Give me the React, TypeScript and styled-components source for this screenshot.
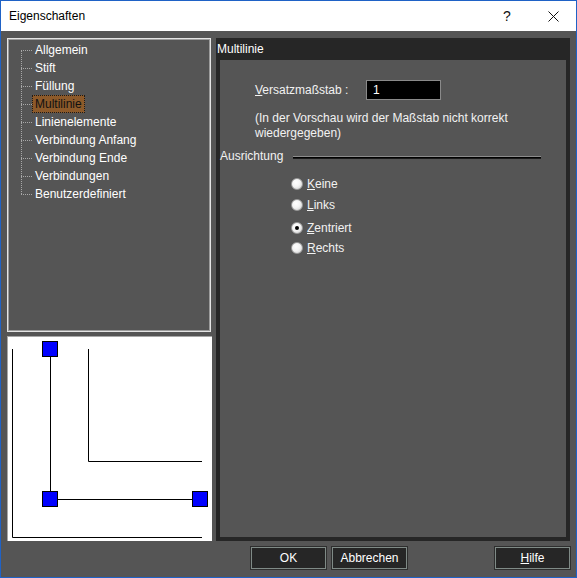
import styled, { createGlobalStyle } from "styled-components";

const GlobalStyle = createGlobalStyle`
  html, body {
    margin: 0;
    padding: 0;
    background: #ffffff;
  }
  body {
    font-family: "Liberation Sans", Arial, sans-serif;
    font-size: 12px;
  }
`;

const Window = styled.div`
  width: 577px;
  height: 578px;
  box-sizing: border-box;
  border: 1px solid #1f62c6;
  display: flex;
  flex-direction: column;
  background: #555555;
`;

const TitleBar = styled.div`
  height: 30px;
  background: #ffffff;
  display: flex;
  align-items: center;
  padding-left: 8px;
  color: #000;
  font-size: 12px;
`;

const TitleText = styled.span`
  flex-grow: 1;
`;

const TitleButton = styled.span`
  width: 46px;
  display: flex;
  justify-content: center;
  align-items: center;
  font-size: 14px;
  color: #111;
`;

const Body = styled.div`
  flex-grow: 1;
  display: flex;
  flex-direction: column;
  padding: 7px 6px 7px 6px;
  gap: 6px;
`;

const Main = styled.div`
  height: 503px;
  display: flex;
  gap: 4px;
`;

const LeftColumn = styled.div`
  width: 205px;
  display: flex;
  flex-direction: column;
  gap: 4px;
`;

const TreePanel = styled.div`
  height: 294px;
  box-sizing: border-box;
  border: 1px solid #e4e4e4;
  box-shadow: inset 0 0 0 1px #9c9c9c;
  width: 204px;
  padding: 2px 0 0 1px;
`;

const TreeList = styled.ul`
  list-style: none;
  margin: 0;
  padding: 0;
  position: relative;
  &::before {
    content: "";
    position: absolute;
    left: 12px;
    top: 9px;
    height: 144px;
    border-left: 1px dotted #a8a8a8;
  }
`;

const TreeItem = styled.li`
  height: 18px;
  display: flex;
  align-items: center;
  padding-left: 12px;
  &::before {
    content: "";
    width: 11px;
    border-top: 1px dotted #a8a8a8;
  }
`;

const TreeLabel = styled.span<{ $selected?: boolean }>`
  padding: 1px 2px;
  line-height: 14px;
  border: 1px dotted ${(p) => (p.$selected ? "#1a1a1a" : "transparent")};
  background: ${(p) => (p.$selected ? "#8d5a2a" : "transparent")};
  color: ${(p) => (p.$selected ? "#111" : "#ffffff")};
`;

const Preview = styled.div`
  height: 205px;
  background: #ffffff;
  border-top: 1px solid #a8a8a8;
  border-left: 1px solid #a8a8a8;
  box-sizing: border-box;
`;

const RightPanel = styled.div`
  flex-grow: 1;
  background: #262626;
  display: flex;
  flex-direction: column;
  padding: 0 4px 4px 4px;
`;

const PanelHeader = styled.div`
  height: 22px;
  display: flex;
  align-items: center;
  margin-left: -3px;
  color: #ffffff;
`;

const PageArea = styled.div`
  flex-grow: 1;
  background: #555555;
  color: #f2f2f2;
  display: flex;
  flex-direction: column;
`;

const FieldRow = styled.div`
  display: flex;
  align-items: center;
  margin: 20px 0 0 35px;
`;

const FieldLabel = styled.label`
  width: 111px;
  white-space: nowrap;
`;

const TextInput = styled.div`
  width: 75px;
  height: 20px;
  box-sizing: border-box;
  background: #000000;
  border: 1px solid #8a8a8a;
  color: #ffffff;
  padding-left: 6px;
  line-height: 18px;
`;

const Note = styled.p`
  margin: 11px 0 0 35px;
  line-height: 15px;
  width: 280px;
`;

const GroupHeader = styled.div`
  display: flex;
  align-items: center;
  margin-top: 8px;
  gap: 10px;
`;

const GroupLine = styled.div`
  width: 248px;
  height: 1px;
  background: #000000;
  border-top: 1px solid #8c8c8c;
  border-bottom: 1px solid #1a1a1a;
  margin-top: 3px;
`;

const RadioList = styled.div`
  display: flex;
  flex-direction: column;
  margin: 13px 0 0 71px;
`;

const RadioRow = styled.div<{ $gap: number }>`
  display: flex;
  align-items: center;
  height: 16px;
  margin-top: ${(p) => p.$gap}px;
  gap: 4px;
`;

const RadioDot = styled.span<{ $checked?: boolean }>`
  width: 12px;
  height: 12px;
  box-sizing: border-box;
  border-radius: 50%;
  border: 1px solid #9a9a9a;
  background: radial-gradient(circle at 40% 35%, #ffffff 0%, #f4f4f4 45%, #c8c8c8 100%);
  display: flex;
  align-items: center;
  justify-content: center;
  &::after {
    content: "";
    width: 4px;
    height: 4px;
    border-radius: 50%;
    background: ${(p) => (p.$checked ? "#000" : "transparent")};
  }
`;

const ButtonRow = styled.div`
  height: 22px;
  display: flex;
  justify-content: flex-end;
  gap: 6px;
`;

const Button = styled.button<{ $push?: number }>`
  width: 75px;
  height: 22px;
  background: #262626;
  border: 1px solid #7f8a86;
  box-shadow: 0 0 0 1px #2e2e2e;
  color: #ffffff;
  font-family: "Liberation Sans", Arial, sans-serif;
  font-size: 12px;
  padding: 0;
  margin-left: ${(p) => p.$push ?? 0}px;
`;

const treeItems = [
  "Allgemein",
  "Stift",
  "Füllung",
  "Multilinie",
  "Linienelemente",
  "Verbindung Anfang",
  "Verbindung Ende",
  "Verbindungen",
  "Benutzerdefiniert",
];

const radios = [
  { key: "K", rest: "eine", gap: 0 },
  { key: "L", rest: "inks", gap: 5 },
  { key: "Z", rest: "entriert", gap: 7 },
  { key: "R", rest: "echts", gap: 4 },
];

const PreviewDrawing = () => (
  <svg width="204" height="204" viewBox="0 0 204 204">
    <g fill="none" stroke="#000" strokeWidth="1">
      <path d="M4.5 12 V200.5 H194" />
      <path d="M80.5 12 V124.5 H194" />
      <path d="M42.5 20 V155" />
      <path d="M50 162.5 H185" />
    </g>
    <g fill="#0000ff" stroke="#000" strokeWidth="1">
      <rect x="34.5" y="4.5" width="15" height="15" />
      <rect x="34.5" y="154.5" width="15" height="15" />
      <rect x="184.5" y="154.5" width="15" height="15" />
    </g>
  </svg>
);

export default function App() {
  return (
    <>
      <GlobalStyle />
      <Window>
        <TitleBar>
          <TitleText>Eigenschaften</TitleText>
          <TitleButton>?</TitleButton>
          <TitleButton>
            <svg width="11" height="11" viewBox="0 0 11 11">
              <path d="M0.5 0.5 L10.5 10.5 M10.5 0.5 L0.5 10.5" stroke="#111" strokeWidth="1" />
            </svg>
          </TitleButton>
        </TitleBar>
        <Body>
          <Main>
            <LeftColumn>
              <TreePanel>
                <TreeList>
                  {treeItems.map((item) => (
                    <TreeItem key={item}>
                      <TreeLabel $selected={item === "Multilinie"}>{item}</TreeLabel>
                    </TreeItem>
                  ))}
                </TreeList>
              </TreePanel>
              <Preview>
                <PreviewDrawing />
              </Preview>
            </LeftColumn>
            <RightPanel>
              <PanelHeader>Multilinie</PanelHeader>
              <PageArea>
                <FieldRow>
                  <FieldLabel>
                    <u>V</u>ersatzmaßstab :
                  </FieldLabel>
                  <TextInput>1</TextInput>
                </FieldRow>
                <Note>(In der Vorschau wird der Maßstab nicht korrekt wiedergegeben)</Note>
                <GroupHeader>
                  Ausrichtung
                  <GroupLine />
                </GroupHeader>
                <RadioList>
                  {radios.map((r) => (
                    <RadioRow key={r.key} $gap={r.gap}>
                      <RadioDot $checked={r.key === "Z"} />
                      <span>
                        <u>{r.key}</u>
                        {r.rest}
                      </span>
                    </RadioRow>
                  ))}
                </RadioList>
              </PageArea>
            </RightPanel>
          </Main>
          <ButtonRow>
            <Button>OK</Button>
            <Button>Abbrechen</Button>
            <Button $push={82}>
              <u>H</u>ilfe
            </Button>
          </ButtonRow>
        </Body>
      </Window>
    </>
  );
}
